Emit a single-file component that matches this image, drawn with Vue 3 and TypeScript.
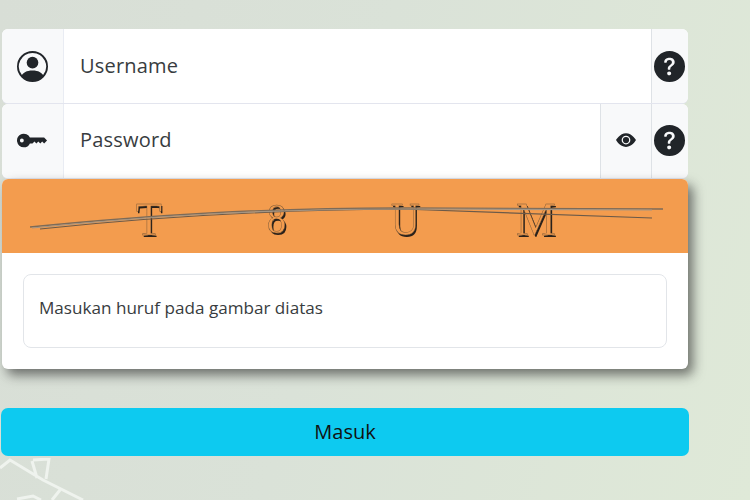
<script setup lang="ts">
const letters: string[] = ['T', '8', 'U', 'M']
</script>

<template>
  <main class="page">
    <svg class="scribble" viewBox="0 0 100 42" width="100" height="42" aria-hidden="true">
      <path d="M0 10 L10 2 L43 22 L83 42 M32 3 L37 20 M33 2 L49 1 L46 21 M17 41 L33 38 L41 42 M60 32 L52 42" />
    </svg>
    <form class="login" @submit.prevent>
      <div class="field">
        <span class="addon left">
          <svg class="icon-lg" viewBox="0 0 16 16" aria-hidden="true">
            <path d="M11 6a3 3 0 1 1-6 0 3 3 0 0 1 6 0z" />
            <path fill-rule="evenodd" d="M0 8a8 8 0 1 1 16 0A8 8 0 0 1 0 8zm8-7a7 7 0 0 0-5.468 11.37C3.242 11.226 4.805 10 8 10s4.757 1.225 5.468 2.37A7 7 0 0 0 8 1z" />
          </svg>
        </span>
        <span class="value">Username</span>
        <span class="addon help">
          <svg class="icon-lg" viewBox="0 0 16 16" aria-hidden="true">
            <path d="M16 8A8 8 0 1 1 0 8a8 8 0 0 1 16 0zM5.496 6.033h.825c.138 0 .248-.113.266-.25.09-.656.54-1.134 1.342-1.134.686 0 1.314.343 1.314 1.168 0 .635-.374.927-.965 1.371-.673.489-1.206 1.06-1.168 1.987l.003.217a.25.25 0 0 0 .25.246h.811a.25.25 0 0 0 .25-.25v-.105c0-.718.273-.927 1.01-1.486.609-.463 1.244-.977 1.244-2.056 0-1.511-1.276-2.241-2.673-2.241-1.267 0-2.655.59-2.75 2.286a.237.237 0 0 0 .241.247zm2.325 6.443c.61 0 1.029-.394 1.029-.927 0-.552-.42-.94-1.029-.94-.584 0-1.009.388-1.009.94 0 .533.425.927 1.01.927z" />
          </svg>
        </span>
      </div>
      <div class="field second">
        <span class="addon left">
          <svg class="icon-lg" viewBox="0 0 16 16" aria-hidden="true">
            <path d="M3.5 11.5a3.5 3.5 0 1 1 3.163-5H14L15.5 8 14 9.5l-1-1-1 1-1-1-1 1-1-1-1 1H6.663a3.5 3.5 0 0 1-3.163 2zM2.5 9a1 1 0 1 0 0-2 1 1 0 0 0 0 2z" />
          </svg>
        </span>
        <span class="value">Password</span>
        <span class="addon eye">
          <svg class="icon-sm" viewBox="0 0 16 16" aria-hidden="true">
            <path d="M10.5 8a2.5 2.5 0 1 1-5 0 2.5 2.5 0 0 1 5 0z" />
            <path d="M0 8s3-5.5 8-5.5S16 8 16 8s-3 5.5-8 5.5S0 8 0 8zm8 3.5a3.5 3.5 0 1 0 0-7 3.5 3.5 0 0 0 0 7z" />
          </svg>
        </span>
        <span class="addon help">
          <svg class="icon-lg" viewBox="0 0 16 16" aria-hidden="true">
            <path d="M16 8A8 8 0 1 1 0 8a8 8 0 0 1 16 0zM5.496 6.033h.825c.138 0 .248-.113.266-.25.09-.656.54-1.134 1.342-1.134.686 0 1.314.343 1.314 1.168 0 .635-.374.927-.965 1.371-.673.489-1.206 1.06-1.168 1.987l.003.217a.25.25 0 0 0 .25.246h.811a.25.25 0 0 0 .25-.25v-.105c0-.718.273-.927 1.01-1.486.609-.463 1.244-.977 1.244-2.056 0-1.511-1.276-2.241-2.673-2.241-1.267 0-2.655.59-2.75 2.286a.237.237 0 0 0 .241.247zm2.325 6.443c.61 0 1.029-.394 1.029-.927 0-.552-.42-.94-1.029-.94-.584 0-1.009.388-1.009.94 0 .533.425.927 1.01.927z" />
          </svg>
        </span>
      </div>
      <section class="captcha">
        <div class="picture">
          <span v-for="l in letters" :key="l" class="glyph">{{ l }}</span>
          <svg class="strike" viewBox="0 0 686 74" aria-hidden="true">
            <path class="s1" d="M28 48 C150 36 260 29 400 29 C500 30 600 30 661 30" />
            <path class="s2" d="M38 50 C150 38 260 31 400 30 C500 34 600 37 650 39" />
            <path class="s3" d="M30 49 C150 37 260 30 400 30 C500 31 600 31 650 31" />
          </svg>
        </div>
        <div class="answer-wrap">
          <div class="answer">Masukan huruf pada gambar diatas</div>
        </div>
      </section>
      <button class="submit" type="submit">Masuk</button>
    </form>
  </main>
</template>

<style scoped>
.page {
  position: relative;
  width: 750px;
  height: 500px;
  overflow: hidden;
  background: linear-gradient(105deg, #d8ded6 0%, #dae2d8 45%, #dfe9d8 100%);
  font-family: "Open Sans", sans-serif;
  padding: 29px 0 0 2px;
  box-sizing: border-box;
}
.scribble {
  position: absolute;
  left: 0;
  bottom: 0;
  fill: none;
  stroke: #eff3ee;
  stroke-width: 3;
  filter: blur(0.5px);
}
.login {
  position: relative;
  width: 686px;
  display: flex;
  flex-direction: column;
}
.field {
  display: flex;
  height: 74px;
  background: #fff;
  border-radius: 6px;
  overflow: hidden;
  box-shadow: 0 1px 0 #e3e5ee;
}
.second {
  margin-top: 1px;
}
.second .addon,
.second .value {
  padding-bottom: 2px;
}
.addon {
  display: flex;
  align-items: center;
  justify-content: center;
  background: #f8f9fa;
  flex: none;
  color: #212529;
}
.left {
  width: 61px;
  border-right: 1px solid #e9ecf3;
}
.help {
  width: 36px;
  border-left: 1px solid #dee2e6;
}
.help .icon-lg {
  margin-right: 2px;
}
.eye {
  width: 50px;
  border-left: 1px solid #dee2e6;
}
.value {
  flex: 1;
  display: flex;
  align-items: center;
  padding-left: 16px;
  font-size: 20px;
  letter-spacing: 0.2px;
  color: #383c40;
  margin-top: -1px;
}
.icon-lg {
  width: 31px;
  height: 31px;
  fill: currentColor;
}
.icon-sm {
  width: 20px;
  height: 20px;
  fill: currentColor;
}
.captcha {
  position: relative;
  z-index: 1;
  height: 190px;
  margin-top: 1px;
  background: #fff;
  border-radius: 6px;
  overflow: hidden;
  box-shadow: 5px 6px 12px rgba(35, 35, 35, 0.6);
}
.picture {
  position: relative;
  height: 74px;
  background: #f39c4e;
  display: flex;
}
.glyph {
  position: absolute;
  top: 0;
  font-family: "Liberation Serif", serif;
  font-size: 47px;
  line-height: 80px;
  color: #f39c4e;
  -webkit-text-stroke: 0.5px rgba(90, 72, 52, 0.8);
  text-shadow: 1.5px 1.5px 0 #2a211a;
  transform-origin: 0 50%;
}
.glyph:nth-child(1) { left: 134px; transform: scaleX(0.9); }
.glyph:nth-child(2) { left: 265px; font-size: 42px; transform: scaleX(0.92); }
.glyph:nth-child(3) { left: 389px; transform: scaleX(0.85); }
.glyph:nth-child(4) { left: 514px; transform: scaleX(0.95); }
.strike {
  position: absolute;
  inset: 0;
  width: 686px;
  height: 74px;
  fill: none;
}
.s1 { stroke: #7d6b58; stroke-width: 1.4; }
.s2 { stroke: #6c5a49; stroke-width: 1.2; }
.s3 { stroke: #a39584; stroke-width: 1.2; }
.answer-wrap {
  padding: 21px;
}
.answer {
  height: 74px;
  box-sizing: border-box;
  border: 1px solid #e2e5e9;
  border-radius: 8px;
  display: flex;
  align-items: center;
  padding: 0 0 8px 15px;
  font-size: 17.1px;
  color: #383c40;
}
.submit {
  margin: 39px 0 0 -1px;
  width: 688px;
  height: 48px;
  border: 0;
  border-radius: 7px;
  background: #0dcaf0;
  font-family: "Open Sans", sans-serif;
  font-size: 20px;
  color: #111;
  padding: 0 0 2px;
}
</style>
